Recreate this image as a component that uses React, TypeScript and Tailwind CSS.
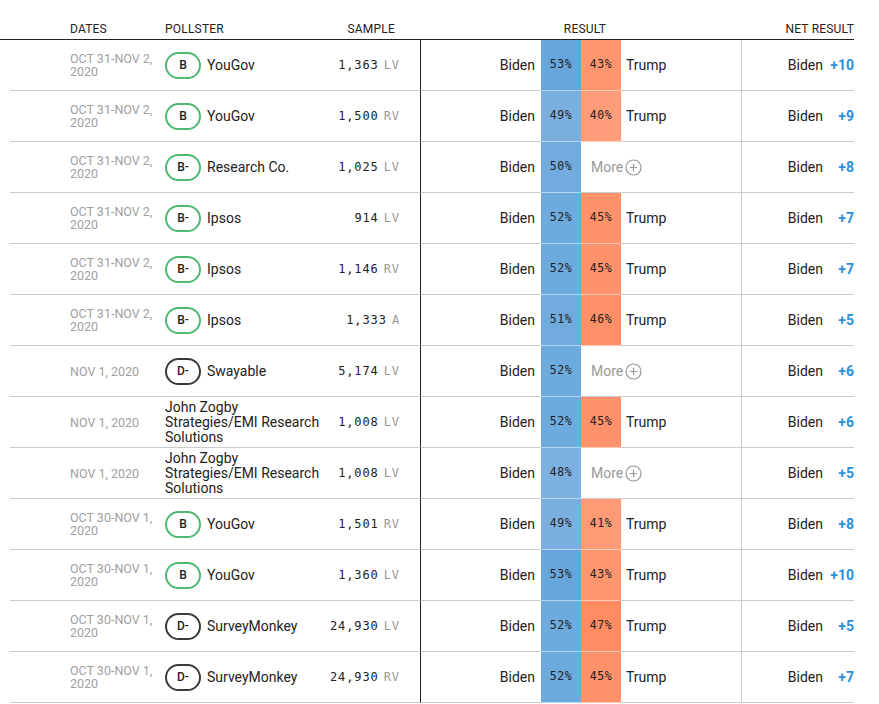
import React from 'react';

type Poll = {
  dates: string;
  grade?: string;
  pollster: string;
  sample: string;
  pop: string;
  biden: number;
  trump?: number;
  net: number;
};

const polls: Poll[] = [
  { dates: 'OCT 31-NOV 2, 2020', grade: 'B', pollster: 'YouGov', sample: '1,363', pop: 'LV', biden: 53, trump: 43, net: 10 },
  { dates: 'OCT 31-NOV 2, 2020', grade: 'B', pollster: 'YouGov', sample: '1,500', pop: 'RV', biden: 49, trump: 40, net: 9 },
  { dates: 'OCT 31-NOV 2, 2020', grade: 'B-', pollster: 'Research Co.', sample: '1,025', pop: 'LV', biden: 50, net: 8 },
  { dates: 'OCT 31-NOV 2, 2020', grade: 'B-', pollster: 'Ipsos', sample: '914', pop: 'LV', biden: 52, trump: 45, net: 7 },
  { dates: 'OCT 31-NOV 2, 2020', grade: 'B-', pollster: 'Ipsos', sample: '1,146', pop: 'RV', biden: 52, trump: 45, net: 7 },
  { dates: 'OCT 31-NOV 2, 2020', grade: 'B-', pollster: 'Ipsos', sample: '1,333', pop: 'A', biden: 51, trump: 46, net: 5 },
  { dates: 'NOV 1, 2020', grade: 'D-', pollster: 'Swayable', sample: '5,174', pop: 'LV', biden: 52, net: 6 },
  { dates: 'NOV 1, 2020', pollster: 'John Zogby Strategies/EMI Research Solutions', sample: '1,008', pop: 'LV', biden: 52, trump: 45, net: 6 },
  { dates: 'NOV 1, 2020', pollster: 'John Zogby Strategies/EMI Research Solutions', sample: '1,008', pop: 'LV', biden: 48, net: 5 },
  { dates: 'OCT 30-NOV 1, 2020', grade: 'B', pollster: 'YouGov', sample: '1,501', pop: 'RV', biden: 49, trump: 41, net: 8 },
  { dates: 'OCT 30-NOV 1, 2020', grade: 'B', pollster: 'YouGov', sample: '1,360', pop: 'LV', biden: 53, trump: 43, net: 10 },
  { dates: 'OCT 30-NOV 1, 2020', grade: 'D-', pollster: 'SurveyMonkey', sample: '24,930', pop: 'LV', biden: 52, trump: 47, net: 5 },
  { dates: 'OCT 30-NOV 1, 2020', grade: 'D-', pollster: 'SurveyMonkey', sample: '24,930', pop: 'RV', biden: 52, trump: 45, net: 7 },
];

const blue: Record<number, string> = {
  53: 'bg-[#67a6dc]',
  52: 'bg-[#6daade]',
  51: 'bg-[#70abde]',
  50: 'bg-[#72acdf]',
  49: 'bg-[#7aafe0]',
  48: 'bg-[#7db1e1]',
};

const red: Record<number, string> = {
  47: 'bg-[#ff8c63]',
  46: 'bg-[#ff8f67]',
  45: 'bg-[#ff916b]',
  43: 'bg-[#ff9670]',
  41: 'bg-[#ff9a76]',
  40: 'bg-[#ff9c7a]',
};

const mono = { fontFamily: '"DejaVu Sans Mono", monospace' };

function Grade({ g }: { g: string }) {
  const good = g.startsWith('B');
  return (
    <span
      className={`flex items-center justify-center w-[36px] h-[27px] rounded-full border-2 text-[12px] font-medium text-[#222] shrink-0 ${
        good ? 'border-[#4db971]' : 'border-[#3a3a3a]'
      }`}
    >
      {g}
    </span>
  );
}

export default function App() {
  return (
    <div className="w-[879px] h-[704px] overflow-hidden bg-white" style={{ fontFamily: 'Roboto, "Liberation Sans", sans-serif' }}>
      <div className="w-[854px]">
        {/* header */}
        <div className="flex items-end h-[40px] border-b border-[#222] pb-[1px] text-[12px] text-[#222] tracking-[0.2px]">
          <div className="w-[165px] pl-[70px]">DATES</div>
          <div className="w-[130px]">POLLSTER</div>
          <div className="w-[100px] text-right">SAMPLE</div>
          <div className="w-[25px]" />
          <div className="w-[321px] text-center pl-[9px]">RESULT</div>
          <div className="flex-1 text-right">NET RESULT</div>
        </div>

        {polls.map((p, i) => (
          <div key={i} className="flex h-[51px]">
            <div className="w-[10px]" />
            <div className="w-[155px] border-b border-[#ccc] pl-[60px] pr-2 flex items-center text-[12.5px] leading-[13px] text-[#a0a0a0]">
              {p.dates}
            </div>
            <div className="w-[160px] border-b border-[#ccc] flex items-center gap-[6px] text-[14px] leading-[15px] text-[#222]">
              {p.grade && <Grade g={p.grade} />}
              <span>{p.pollster}</span>
            </div>
            <div className="w-[75px] border-b border-[#ccc] flex items-center justify-end text-[12px] tracking-[0.9px]" style={mono}>
              <span className="text-[#222]">{p.sample}</span>
              <span className="text-[#999] ml-[5px]">{p.pop}</span>
            </div>
            <div className="w-[20px] border-b border-[#ccc]" />
            <div className="w-[321px] border-l border-l-[#222] border-b border-[#ccc] flex items-stretch">
              <div className="w-[120px] flex items-center justify-end pr-[6px] text-[14px] text-[#222]">Biden</div>
              <div
                className={`w-[40px] -mb-px border-b border-b-white/50 flex items-center justify-center text-[11.5px] tracking-[0.5px] text-[#222] ${blue[p.biden]}`}
                style={mono}
              >
                {p.biden}%
              </div>
              {p.trump !== undefined ? (
                <>
                  <div
                    className={`w-[40px] -mb-px border-b border-b-white/50 flex items-center justify-center text-[11.5px] tracking-[0.5px] text-[#222] ${red[p.trump]}`}
                    style={mono}
                  >
                    {p.trump}%
                  </div>
                  <div className="flex items-center pl-[5px] text-[14px] text-[#222]">Trump</div>
                </>
              ) : (
                <div className="flex items-center pl-[10px] text-[14px] text-[#999]">
                  More
                  <svg width="17" height="17" viewBox="0 0 17 17" className="ml-[2px]">
                    <circle cx="8.5" cy="8.5" r="7.5" fill="none" stroke="#999" strokeWidth="1.2" />
                    <path d="M8.5 4.8v7.4M4.8 8.5h7.4" stroke="#999" strokeWidth="1.2" />
                  </svg>
                </div>
              )}
            </div>
            <div className="flex-1 border-l border-l-[#ccc] border-b border-[#ccc] flex items-center justify-end text-[14px]">
              <span className="text-[#222]">Biden</span>
              <span className="w-[31px] text-right font-bold text-[#2b90d9]">+{p.net}</span>
            </div>
          </div>
        ))}
      </div>
    </div>
  );
}
